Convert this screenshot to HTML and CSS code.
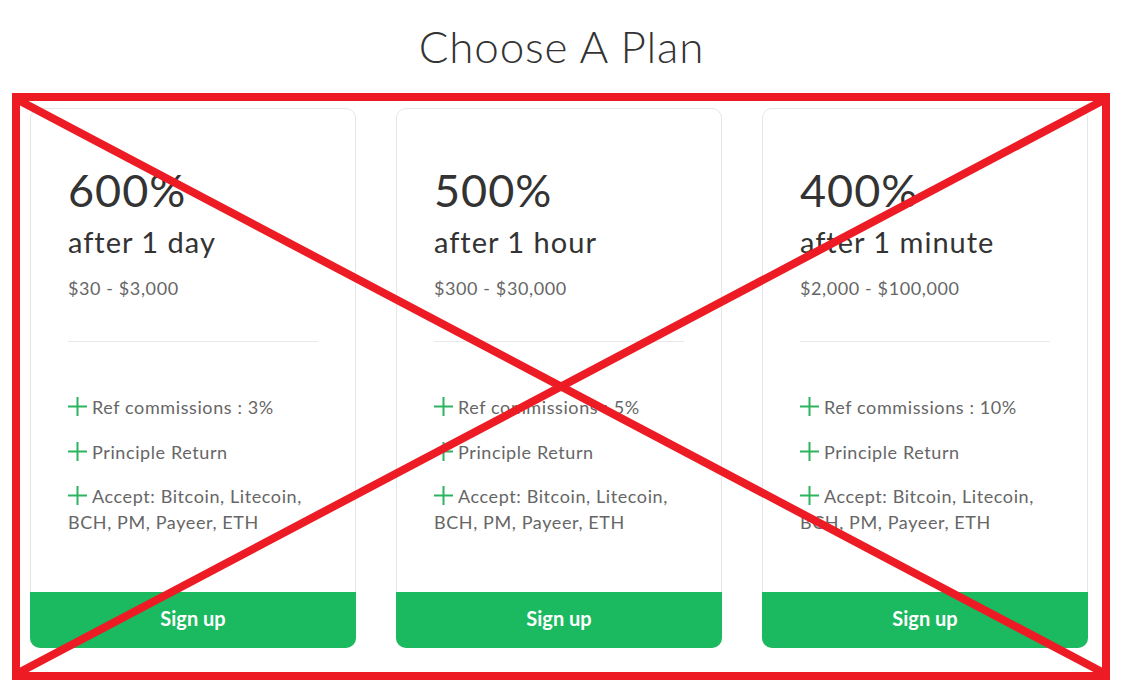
FILE: index.html
```html
<!DOCTYPE html>
<html lang="en">
<head>
  <meta charset="UTF-8">
  <title>Choose A Plan</title>
  <link rel="stylesheet" href="styles.css">
</head>
<body>
  <div id="page">
    <h1 class="title">Choose A Plan</h1>

    <div class="plans">
      <div class="plan">
        <div class="plan-body">
          <div class="rate">600%</div>
          <div class="period">after 1 day</div>
          <div class="range">$30 - $3,000</div>
          <hr class="divider">
          <ul class="features">
            <li><svg class="plus" viewBox="0 0 19 19"><path d="M9.5 0v19M0 9.5h19"/></svg>Ref commissions : 3%</li>
            <li><svg class="plus" viewBox="0 0 19 19"><path d="M9.5 0v19M0 9.5h19"/></svg>Principle Return</li>
            <li><svg class="plus" viewBox="0 0 19 19"><path d="M9.5 0v19M0 9.5h19"/></svg>Accept: Bitcoin, Litecoin, BCH, PM, Payeer, ETH</li>
          </ul>
        </div>
        <a class="signup" href="#">Sign up</a>
      </div>

      <div class="plan">
        <div class="plan-body">
          <div class="rate">500%</div>
          <div class="period">after 1 hour</div>
          <div class="range">$300 - $30,000</div>
          <hr class="divider">
          <ul class="features">
            <li><svg class="plus" viewBox="0 0 19 19"><path d="M9.5 0v19M0 9.5h19"/></svg>Ref commissions : 5%</li>
            <li><svg class="plus" viewBox="0 0 19 19"><path d="M9.5 0v19M0 9.5h19"/></svg>Principle Return</li>
            <li><svg class="plus" viewBox="0 0 19 19"><path d="M9.5 0v19M0 9.5h19"/></svg>Accept: Bitcoin, Litecoin, BCH, PM, Payeer, ETH</li>
          </ul>
        </div>
        <a class="signup" href="#">Sign up</a>
      </div>

      <div class="plan">
        <div class="plan-body">
          <div class="rate">400%</div>
          <div class="period">after 1 minute</div>
          <div class="range">$2,000 - $100,000</div>
          <hr class="divider">
          <ul class="features">
            <li><svg class="plus" viewBox="0 0 19 19"><path d="M9.5 0v19M0 9.5h19"/></svg>Ref commissions : 10%</li>
            <li><svg class="plus" viewBox="0 0 19 19"><path d="M9.5 0v19M0 9.5h19"/></svg>Principle Return</li>
            <li><svg class="plus" viewBox="0 0 19 19"><path d="M9.5 0v19M0 9.5h19"/></svg>Accept: Bitcoin, Litecoin, BCH, PM, Payeer, ETH</li>
          </ul>
        </div>
        <a class="signup" href="#">Sign up</a>
      </div>
    </div>

    <!-- crossed-out overlay -->
    <svg class="cross" viewBox="0 0 1123 694">
      <rect x="16" y="97" width="1090" height="579"/>
      <path d="M20 101L1102 672M1102 101L20 672"/>
    </svg>
  </div>
</body>
</html>
```

FILE: styles.css
```css
body {
  margin: 0;
  background: #fff;
  font-family: Lato, "Open Sans", sans-serif;
  color: #333;
}

#page {
  position: relative;
  width: 1123px;
  height: 694px;
  overflow: hidden;
}

.title {
  margin: 20px 0 35px;
  font-size: 44px;
  font-weight: 300;
  line-height: 1.2;
  text-align: center;
  letter-spacing: 0.8px;
  color: #333;
}

.plans {
  display: flex;
  gap: 40px;
  padding-left: 30px;
}

.plan {
  width: 326px;
  height: 540px;
  box-sizing: border-box;
  display: flex;
  flex-direction: column;
  border: 1px solid #e6e6e6;
  border-radius: 10px;
}

.plan-body {
  flex: 1;
  padding: 55px 37px 0;
}

.rate {
  font-size: 45px;
  line-height: 52px;
  letter-spacing: 1px;
  color: #333;
}

.period {
  margin-top: 9px;
  font-size: 29px;
  line-height: 34px;
  letter-spacing: 1px;
  color: #333;
}

.range {
  margin-top: 17px;
  font-size: 18px;
  line-height: 25.5px;
  letter-spacing: 0.6px;
  color: #666;
}

.divider {
  margin: 40px 0 53px;
  border: none;
  border-top: 1px solid #e8e8e8;
}

.features {
  list-style: none;
  margin: 0;
  padding: 0;
  font-size: 18px;
  line-height: 25.5px;
  letter-spacing: 0.6px;
  color: #666;
}

.features li {
  margin-bottom: 19px;
}

.plus {
  width: 19px;
  height: 19px;
  margin-right: 5px;
  vertical-align: -2px;
  fill: none;
  stroke: #2cb45f;
  stroke-width: 2;
}

.signup {
  display: block;
  height: 56px;
  line-height: 53px;
  margin: 0 -1px -1px;
  background: #1bb960;
  color: #fff;
  text-align: center;
  font-size: 20px;
  font-weight: 700;
  text-decoration: none;
  border-radius: 0 0 10px 10px;
}

.cross {
  position: absolute;
  left: 0;
  top: 0;
  width: 1123px;
  height: 694px;
  fill: none;
  stroke: #ed1c24;
  stroke-width: 8;
}
```
